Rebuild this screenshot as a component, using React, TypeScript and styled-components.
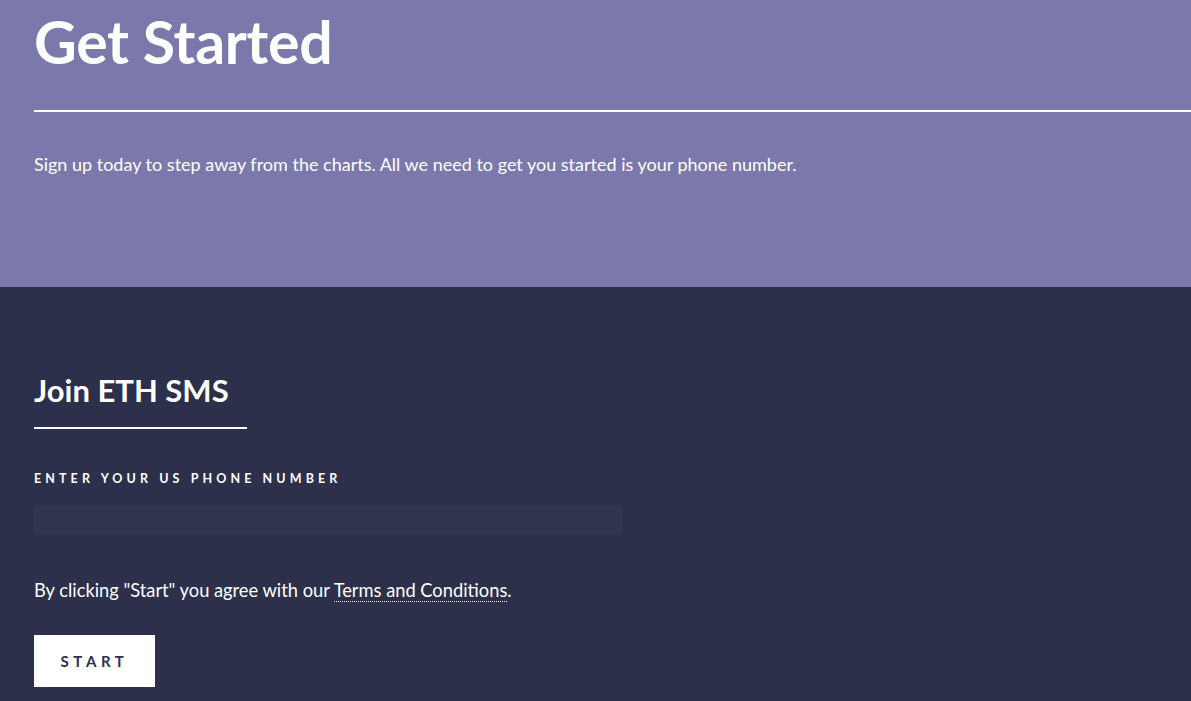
import React from "react";
import styled, { createGlobalStyle } from "styled-components";

const Global = createGlobalStyle`
  html, body { margin: 0; padding: 0; }
  body {
    background: #2c304b;
    font-family: Lato, "Open Sans", sans-serif;
    color: #ffffff;
    -webkit-font-smoothing: antialiased;
  }
`;

const Page = styled.div`
  display: flex;
  flex-direction: column;
  min-height: 701px;
  overflow: hidden;
`;

const Hero = styled.section`
  background: #7b79ab;
  height: 287px;
  box-sizing: border-box;
  padding: 0 0 0 34px;
  display: flex;
  flex-direction: column;
`;

const Title = styled.h1`
  margin: 0;
  padding-top: 9px;
  font-size: 59px;
  line-height: 66px;
  font-weight: 700;
  letter-spacing: -0.3px;
  color: #fff;
`;

const Rule = styled.div<{ $width?: string; $top: number }>`
  height: 2px;
  background: #ffffff;
  width: ${(p) => p.$width ?? "auto"};
  margin-top: ${(p) => p.$top}px;
`;

const Lead = styled.p`
  margin: 39px 0 0;
  font-size: 18px;
  line-height: 26px;
  color: #fff;
`;

const Join = styled.section`
  flex: 1;
  background: radial-gradient(ellipse 400px 60px at 610px 720px, #282d42 0%, rgba(44,48,75,0) 100%), #2c304b;
  padding: 85px 0 14px 34px;
  display: flex;
  flex-direction: column;
  align-items: flex-start;
`;

const Heading = styled.h2`
  margin: 0;
  font-size: 31px;
  line-height: 36px;
  font-weight: 700;
  color: #fff;
`;

const Label = styled.label`
  margin-top: 42px;
  font-size: 12.5px;
  line-height: 16px;
  font-weight: 700;
  letter-spacing: 4.1px;
  text-transform: uppercase;
  color: #fff;
`;

const Input = styled.input`
  margin-top: 18px;
  width: 588px;
  height: 30px;
  box-sizing: border-box;
  border: none;
  outline: none;
  background: #31344f;
  color: #fff;
  font: inherit;
  padding: 0 10px;
`;

const Agree = styled.p`
  margin: 43px 0 0;
  font-size: 18.3px;
  line-height: 24px;
  color: #fff;
`;

const TermsLink = styled.a`
  color: #fff;
  text-decoration: none;
  border-bottom: 1px dotted #ffffff;
`;

const StartButton = styled.button`
  margin-top: 33px;
  width: 121px;
  height: 52px;
  border: none;
  background: #ffffff;
  color: #2c304b;
  font-family: Lato, "Open Sans", sans-serif;
  font-weight: 700;
  font-size: 15px;
  letter-spacing: 4.6px;
  padding: 0;
  cursor: pointer;
`;

export default function App() {
  return (
    <Page>
      <Global />
      <Hero>
        <Title>Get Started</Title>
        <Rule $top={35} />
        <Lead>
          Sign up today to step away from the charts. All we need to get you started is your phone number.
        </Lead>
      </Hero>
      <Join>
        <Heading>Join ETH SMS</Heading>
        <Rule $width="213px" $top={19} />
        <Label htmlFor="phone">Enter your US phone number</Label>
        <Input id="phone" type="tel" />
        <Agree>
          By clicking "Start" you agree with our <TermsLink href="#">Terms and Conditions</TermsLink>.
        </Agree>
        <StartButton>START</StartButton>
      </Join>
    </Page>
  );
}
